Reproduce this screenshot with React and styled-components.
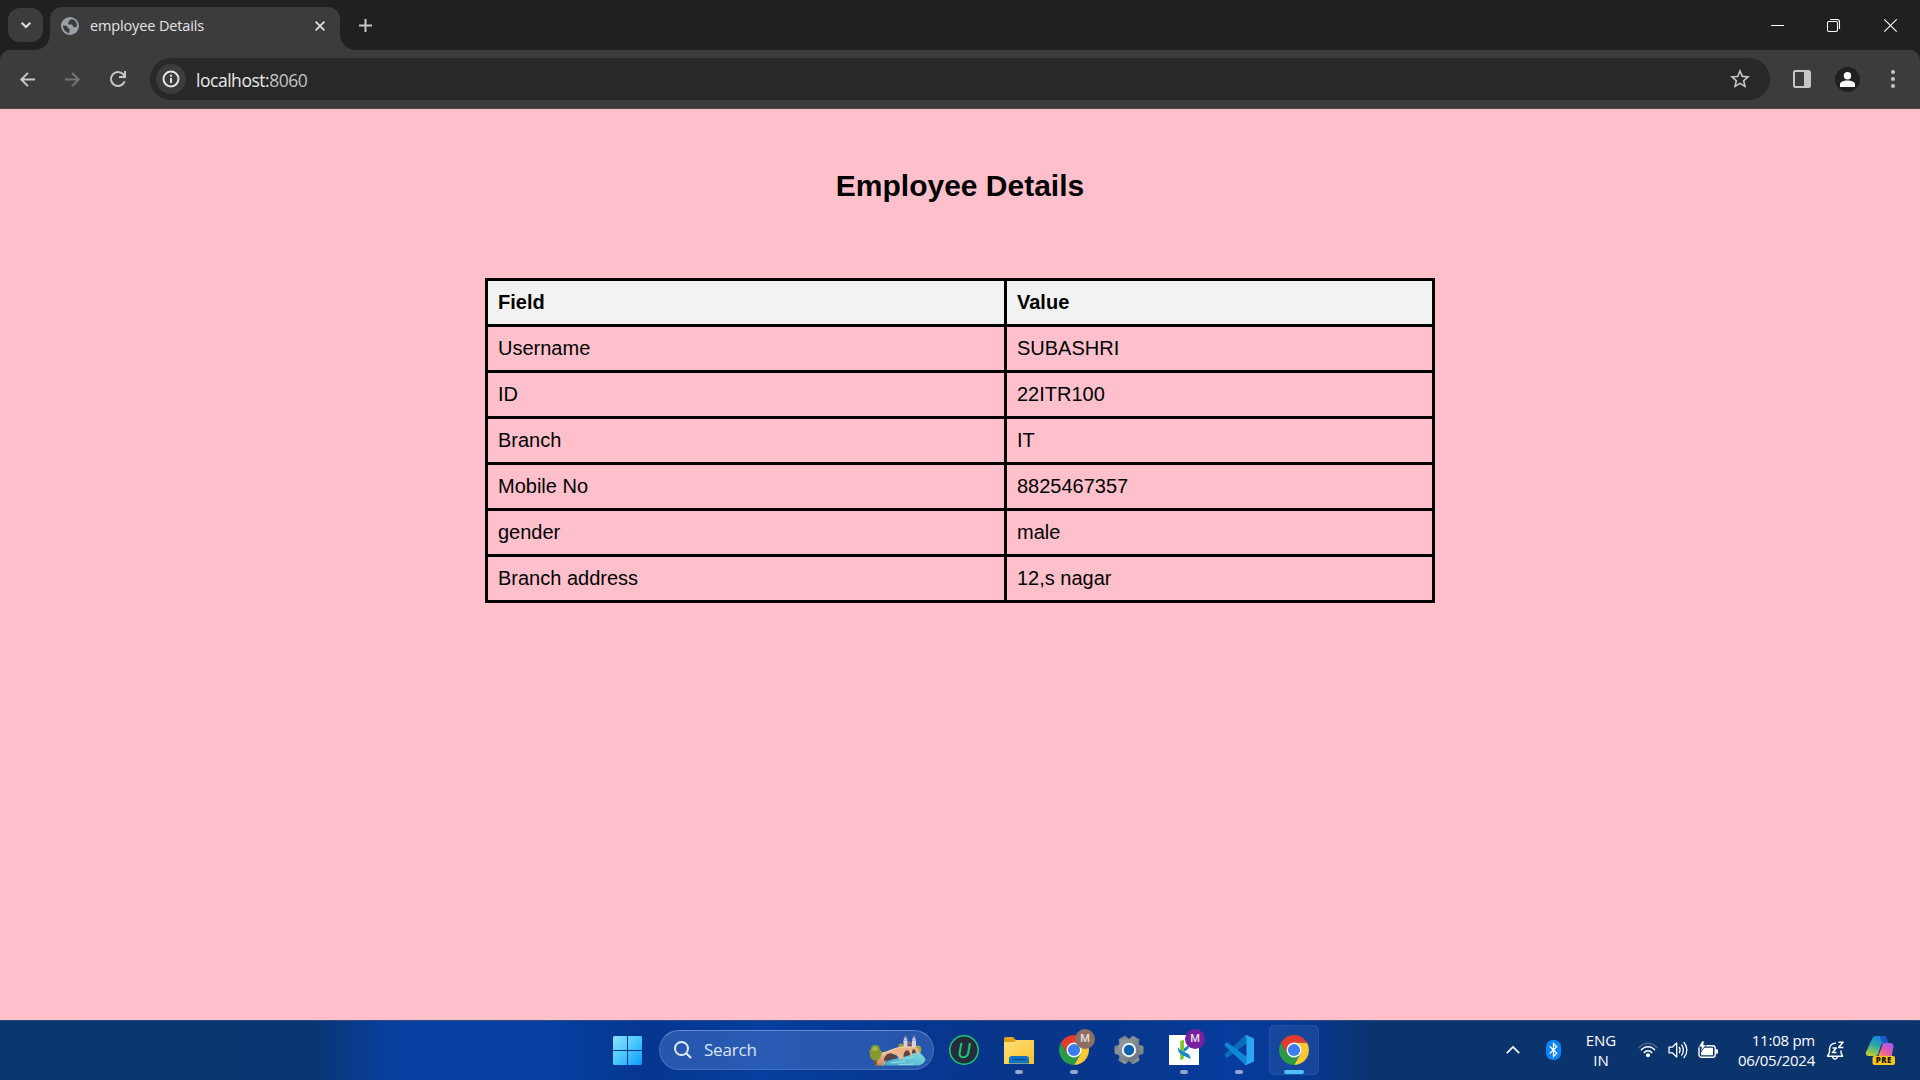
import React from 'react';
import styled, { createGlobalStyle } from 'styled-components';

const uiFont = '"Open Sans", "Noto Sans", sans-serif';

const GlobalStyle = createGlobalStyle`
  html, body { margin: 0; padding: 0; }
  body { overflow: hidden; }
  * { box-sizing: border-box; }
  svg { display: block; flex: none; overflow: visible; }
`;

const Screen = styled.div`
  display: flex;
  flex-direction: column;
  width: 1920px;
  height: 1080px;
  font-family: ${uiFont};
  overflow: hidden;
`;

/* ---------- browser frame ---------- */

const TabStrip = styled.header`
  display: flex;
  align-items: flex-end;
  height: 50px;
  padding-left: 8px;
  background: #1f2121;
`;

const TabSearch = styled.button`
  display: grid;
  place-items: center;
  width: 35px;
  height: 34px;
  margin: 0 7px 8px 0;
  padding: 0;
  border: 0;
  border-radius: 12px;
  background: #3c3c3c;
`;

const Tab = styled.div`
  position: relative;
  display: flex;
  align-items: center;
  width: 290px;
  height: 43px;
  padding: 0 15px 6px 11px;
  border-radius: 12px 12px 0 0;
  background: #3c3c3c;

  &::before,
  &::after {
    content: '';
    position: absolute;
    bottom: 0;
    width: 15px;
    height: 15px;
  }
  &::before {
    left: -15px;
    background: radial-gradient(circle at 0 0, transparent 14.5px, #3c3c3c 15px);
  }
  &::after {
    right: -15px;
    background: radial-gradient(circle at 100% 0, transparent 14.5px, #3c3c3c 15px);
  }
`;

const TabTitle = styled.span`
  flex: 1;
  margin-left: 11px;
  font-size: 14.5px;
  line-height: 20px;
  letter-spacing: -0.14px;
  color: #e3e3e3;
  white-space: nowrap;
`;

const NewTab = styled.div`
  display: grid;
  place-items: center;
  width: 34px;
  height: 34px;
  margin: 0 auto 8px 8px;
`;

const WindowButton = styled.div`
  display: grid;
  place-items: center;
  flex: none;
  width: ${(p) => p.$w}px;
  height: 50px;
`;

const ToolbarBack = styled.div`
  background: #1f2121;
`;

const Toolbar = styled.div`
  display: flex;
  align-items: center;
  height: 59px;
  border-radius: 10px 10px 0 0;
  border-bottom: 1px solid #4a4848;
  background: #3c3c3c;
`;

const NavGroup = styled.nav`
  display: flex;
  flex: none;
  width: 150px;
  padding-left: 5px;
`;

const ToolButton = styled.div`
  display: grid;
  place-items: center;
  flex: none;
  width: ${(p) => p.$w || 45}px;
  height: 40px;
  padding-left: ${(p) => p.$shift || 0}px;
`;

const AddressBar = styled.div`
  display: flex;
  align-items: center;
  flex: none;
  width: 1620px;
  height: 42px;
  padding: 0 20px 0 6px;
  border-radius: 21px;
  background: #282828;
`;

const SiteInfo = styled.div`
  display: grid;
  place-items: center;
  width: 30px;
  height: 30px;
  border-radius: 50%;
  background: #3c3c3c;
`;

const Address = styled.span`
  flex: 1;
  margin-left: 10px;
  padding-top: 1px;
  font-size: 17.5px;
  line-height: 24px;
  letter-spacing: -0.47px;
  color: #e8e8e8;
`;

const Port = styled.span`
  color: #c3c3c3;
`;

const Profile = styled.div`
  display: grid;
  place-items: center;
  width: 25px;
  height: 25px;
  border-radius: 50%;
  background: #1f2121;
`;

/* ---------- page ---------- */

const Page = styled.main`
  flex: 1;
  display: flex;
  flex-direction: column;
  align-items: center;
  background: #ffc0cb;
  color: #000;
  font-family: Arial, "Liberation Sans", sans-serif;
`;

const Heading = styled.h1`
  margin: 60px 0 75px;
  font-size: 30px;
  line-height: 34px;
  font-weight: 700;
`;

const Table = styled.table`
  width: 950px;
  table-layout: fixed;
  border-collapse: separate;
  border-spacing: 3px;
  background: #000;
  font-size: 20px;
  line-height: 23px;
`;

const HeadCell = styled.th`
  width: ${(p) => p.$w}px;
  padding: 10px;
  background: #f2f2f2;
  text-align: left;
`;

const Cell = styled.td`
  padding: 10px;
  background: #ffc0cb;
`;

/* ---------- taskbar ---------- */

const Taskbar = styled.footer`
  display: flex;
  align-items: center;
  height: 60px;
  box-shadow: inset 0 1px #2c4c7c;
  color: #fff;
  background: linear-gradient(
    90deg,
    #0b356e 0,
    #0b3572 310px,
    #07409f 390px,
    #0640a2 540px,
    #053690 650px,
    #063f9f 760px,
    #063792 900px,
    #073588 1030px,
    #07388f 1150px,
    #063c9d 1230px,
    #07388f 1310px,
    #0b346f 1370px,
    #0b336b 1920px
  );
`;

const StartButton = styled.div`
  flex: none;
  width: 29px;
  height: 29px;
  margin: 0 17px 0 613px;
`;

const SearchBox = styled.div`
  display: flex;
  align-items: center;
  flex: none;
  width: 275px;
  height: 40px;
  padding: 0 7px 0 14px;
  border: 1px solid rgba(150, 180, 235, 0.28);
  border-top-color: rgba(170, 195, 245, 0.45);
  border-radius: 20px;
  background: rgba(80, 125, 205, 0.46);
`;

const SearchLabel = styled.span`
  flex: 1;
  margin-left: 12px;
  font-size: 17px;
  line-height: 24px;
  letter-spacing: -0.2px;
  color: #dce5f5;
`;

const Apps = styled.div`
  display: flex;
  gap: 5px;
  margin-left: 5px;
`;

const AppButton = styled.div`
  position: relative;
  display: grid;
  place-items: center;
  width: 50px;
  height: 50px;
  border-radius: 5px;
  border: 1px solid ${(p) => (p.$active ? 'rgba(120,155,215,0.14)' : 'transparent')};
  background: ${(p) => (p.$active ? 'rgba(90,130,200,0.2)' : 'transparent')};
`;

const Indicator = styled.i`
  position: absolute;
  bottom: 0;
  left: 50%;
  width: ${(p) => (p.$active ? 20 : 8)}px;
  height: 4px;
  margin-left: ${(p) => (p.$active ? -10 : -4)}px;
  border-radius: 2px;
  background: ${(p) => (p.$active ? '#4cc2ff' : '#94a7cd')};
`;

const Badge = styled.span`
  position: absolute;
  top: 3px;
  right: 3px;
  display: grid;
  place-items: center;
  width: 20px;
  height: 20px;
  border-radius: 50%;
  background: ${(p) => p.$color};
  font: 500 11px/20px Roboto, sans-serif;
  color: #e9e0dd;
`;

const Tray = styled.div`
  display: flex;
  align-items: center;
  margin-left: 174px;
`;

const TraySlot = styled.div`
  display: grid;
  place-items: center;
  width: ${(p) => p.$w}px;
  height: 40px;
`;

const TrayText = styled.div`
  width: ${(p) => p.$w}px;
  padding-bottom: 1px;
  font-size: ${(p) => p.$size}px;
  line-height: 20px;
  letter-spacing: ${(p) => p.$track || 0}px;
  text-align: ${(p) => p.$align};
  white-space: nowrap;
`;

/* ---------- drawings ---------- */

const Line = ({ w, h, d, color = '#dedede', sw = 2, cap = 'butt', children }) => (
  <svg width={w} height={h} viewBox={`0 0 ${w} ${h}`} fill="none" stroke={color} strokeWidth={sw} strokeLinecap={cap}>
    {d && <path d={d} />}
    {children}
  </svg>
);

const Globe = () => (
  <svg width="18" height="18" viewBox="0 0 18 18">
    <circle cx="9" cy="9" r="9" fill="#9aa0a6" />
    <path
      d="M2 8.6c2 0 3.600 .2 4.300 1.100s.2 1.600 1.500 1.800c.8.1.8.9.700 1.500l-.3 3c-3.300-.3-6.400-3.400-6.200-7.400zM10.600 2c-.3 1.100-1.800 1.200-2.400 1.600s.2 1.600-.8 2.200c-.7.5-.5 1.600.6 1.700 1.200.1 2.700-.4 3.500.6.700.9.100 1.700 1.200 2 1.400.3 2.400-.1 3.200-.8.500-3.400-1.700-6.400-5.300-7.300z"
      fill="#3c3c3c"
    />
  </svg>
);

const Star = () => (
  <svg width="20" height="20" viewBox="2 2 20 20" fill="#c7c7c7">
    <path d="M22 9.240l-7.190-.620L12 2 9.190 8.630 2 9.240l5.460 4.730L5.820 21 12 17.270 18.180 21l-1.630-7.030L22 9.240zM12 15.400l-3.760 2.270 1-4.280-3.320-2.880 4.380-.380L12 6.100l1.710 4.040 4.380.380-3.320 2.880 1 4.280L12 15.400z" />
  </svg>
);

const Chrome = ({ size = 30 }) => (
  <svg width={size} height={size} viewBox="0 0 48 48">
    <path d="M24 12H44.780A24 24 0 0 1 24 48L34.390 30z" fill="#fcc934" />
    <path d="M13.610 30 3.220 12A24 24 0 0 0 24 48L34.390 30 24 24z" fill="#2a9a48" />
    <path d="M24 12H44.780A24 24 0 0 0 3.220 12L13.610 30z" fill="#e33b2e" />
    <circle cx="24" cy="24" r="12" fill="#fff" />
    <circle cx="24" cy="24" r="9.700" fill="#3a7df0" />
  </svg>
);

const WindowsLogo = () => (
  <svg width="29" height="29" viewBox="0 0 29 29">
    <defs>
      <linearGradient id="win" gradientUnits="userSpaceOnUse" x1="0" y1="0" x2="29" y2="29">
        <stop offset="0" stopColor="#8be3ff" />
        <stop offset=".5" stopColor="#4bc8fb" />
        <stop offset="1" stopColor="#0a9bf8" />
      </linearGradient>
    </defs>
    <path d="M1 0h13v14H0V1zM15 0h13l1 1v13H15zM0 15h14v14H1l-1-1zM15 15h14v13l-1 1H15z" fill="url(#win)" />
  </svg>
);

const Bridge = () => (
  <svg width="57" height="31" viewBox="0 0 57 31">
    <defs>
      <linearGradient id="water" x1="0" y1="1" x2="1" y2="0">
        <stop offset="0" stopColor="#3fa9c6" />
        <stop offset="1" stopColor="#86dfe2" />
      </linearGradient>
      <linearGradient id="stone" x1="1" y1="0" x2="0" y2="1">
        <stop offset="0" stopColor="#e6ad84" />
        <stop offset=".6" stopColor="#f0bb92" />
        <stop offset="1" stopColor="#b9805f" />
      </linearGradient>
    </defs>
    <circle cx="32" cy="11" r="2.600" fill="#97a03a" />
    <ellipse cx="49.300" cy="14.500" rx="3" ry="4" fill="#a3a83c" />
    <path d="M34.500 12V5.500h4V12zM43 12V5.500h4V12z" fill="#ddd2e2" />
    <path d="M34.300 5.500l2.200-5.500 2.200 5.500zM42.800 5.500L45 0l2.200 5.500z" fill="#c9bcd6" />
    <path d="M36 2.500l.5-2.500.5 2.500zM44.500 2.500L45 0l.5 2.500z" fill="#5d4f86" />
    <path d="M38.500 8l2.200-2 2.300 2v4.500h-4.500z" fill="#8c6c7d" />
    <path d="M39.800 9.500h2v3h-2z" fill="#4d3d55" />
    <path d="M13 30.500c1-3 6-5 13-6.500 8-1.500 13-3.500 16-5.500l8-2.500c1 3 6 5 6.500 9-1.500 3-4 5.500-8 5.500z" fill="url(#water)" />
    <path d="M6 30.500c-.5-6 1-11 7-12.500 7-1.500 13-5 19-6 6-.8 11-.5 16 1l1.500 1v4l-2.500 1c-.5-3-2.500-4-3.500-1v2l-3 .5c-.5-5-5-5-6-.5v3l-4.500 1.500c-1-6-8-7-11-1-2 2-3.500 4-4 7z" fill="url(#stone)" />
    <path d="M15 26c-.5-8 9.500-11.500 12.500-2.500C23 24 18.500 24.500 15 26zM35 21.500c-.5-7 5-9 6.500-1.500zM43 18.500c-.2-5 3-6 4-.5z" fill="#5d4340" />
    <path d="M11 18.500c8-1 14-6 23-6.500h14" fill="none" stroke="#f8d3b0" strokeWidth="1" />
    <path d="M22 28l14-1.500M34 24l11-2M30 29.500l15-.5" stroke="#b0e8ec" strokeWidth=".8" />
    <path d="M5 23h2.800v7H5z" fill="#725529" />
    <path d="M.8 19c-1-2.500 0-4.500 1.200-5 0-3 2.500-4.500 4.700-4 2.800 0 4 2 4 4.500 2.600 1.500 2.600 4.500 1.300 6-.5 3-3 5-5.800 5-3.200 0-5.400-3-5.400-6.500z" fill="#869a30" />
    <path d="M3 14.500c1-3 4-3.500 5.500-1.500 1 3-3 4-5.500 1.500z" fill="#a9b947" />
  </svg>
);

const UninstallerIcon = () => (
  <svg width="30" height="30" viewBox="0 0 30 30">
    <circle cx="15" cy="15" r="14.200" fill="#252d3c" stroke="#20c874" strokeWidth="1.500" />
    <text x="15" y="22.500" textAnchor="middle" fontFamily="Roboto, sans-serif" fontStyle="italic" fontSize="21" fill="#20c874">U</text>
  </svg>
);

const FolderIcon = () => (
  <svg width="30" height="27" viewBox="0 0 30 27">
    <defs>
      <linearGradient id="folder" x1="0" y1="0" x2="1" y2="1">
        <stop offset="0" stopColor="#ffe07a" />
        <stop offset="1" stopColor="#fbc22d" />
      </linearGradient>
    </defs>
    <path d="M0 1.500Q0 0 1.500 0H9l3 3h3v4H0z" fill="#dea117" />
    <path d="M0 5h10l2.500-2H30v24H0z" fill="url(#folder)" />
    <path d="M5 26.500V22q0-3 3-3h14q3 0 3 3v4.500z" fill="#0f74c9" />
    <path d="M8 22.500h14" stroke="#0a4f8f" strokeWidth="1.300" />
  </svg>
);

const teeth = [0, 60, 120, 180, 240, 300];

const GearIcon = () => (
  <svg width="30" height="30" viewBox="0 0 30 30">
    <defs>
      <linearGradient id="gear" x1="0" y1="0" x2="1" y2="1">
        <stop offset="0" stopColor="#9ba2a8" />
        <stop offset="1" stopColor="#666e76" />
      </linearGradient>
    </defs>
    <g fill="url(#gear)" stroke="#7f878e" strokeWidth="1" strokeLinejoin="round">
      {teeth.map((a) => (
        <path key={a} d="M10 6l1.500-5h7L20 6z" transform={`rotate(${a + 30} 15 15)`} />
      ))}
    </g>
    <circle cx="15" cy="15" r="11.300" fill="url(#gear)" />
    <circle cx="15" cy="15" r="7.200" fill="#f2f5f8" />
    <circle cx="15" cy="15" r="5.200" fill="#0b63b0" />
  </svg>
);

const SproutIcon = () => (
  <svg width="30" height="30" viewBox="0 0 30 30">
    <path d="M0 0h30v30H0z" fill="#fff" />
    <path d="M11.300 6l3.600-1.200V22q0 2.500-3.600 3z" fill="#7ac51c" />
    <path d="M14.900 13.500L20 9.800q.5 3.200-1.500 4.700l-3.600 2.500z" fill="#1487d4" />
    <path d="M9 12q.8 2.500 4 4l5.500 2.600q3 1.600 3 5.400l-8.700-4.200Q8.500 17.500 9 12z" fill="#1487d4" />
  </svg>
);

const CodeIcon = () => (
  <svg width="30" height="30" viewBox="0 0 30 30">
    <path d="M1 19L20.500.8Q21.500 0 22.500 0L27 5 4 22.300q-1 .7-1.800 0L.9 21q-.8-1 .1-2z" fill="#0a6db9" />
    <path d="M1 11l19.500 18.200q1 .8 2 .8L27 25 4 7.700q-1-.7-1.800 0L.9 9q-.8 1 .1 2z" fill="#0f87d2" />
    <path d="M22 0l7 3q1 .5 1 1.600v20.800q0 1.100-1 1.600l-7 3q-1 .1-1.700-.6 2.200.8 2.200-1.400V2q0-2.200-2.200-1.400Q21 0 22 0z" fill="#2ba7f2" />
  </svg>
);

const Wifi = () => (
  <svg width="20" height="16" viewBox="0 0 20 16" fill="none" stroke="#fff" strokeWidth="1.600">
    <path d="M.6 6.200C5.500-.2 14.500-.2 19.400 6.200" stroke="#456490" />
    <path d="M3 8.300c3.700-4.700 10.300-4.700 14 0M5.900 10.900c2.200-2.800 6-2.800 8.200 0" />
    <circle cx="10" cy="13.300" r="2" fill="#fff" stroke="none" />
  </svg>
);

const Speaker = () => (
  <svg width="20" height="18" viewBox="0 0 20 18" fill="none" stroke="#fff" strokeWidth="1.300" strokeLinejoin="round" strokeLinecap="round">
    <path d="M1 6.200h3.200L8.700 2v14l-4.500-4.200H1z" />
    <path d="M11.300 6.300c1 1.600 1 3.800 0 5.400M13.700 3.900c2.200 2.900 2.200 7.300 0 10.200M16 1.500c3.800 4.300 3.800 10.700 0 15" />
  </svg>
);

const Battery = () => (
  <svg width="20" height="18" viewBox="0 0 20 18">
    <rect x="1" y="4.700" width="16.200" height="11.600" rx="2.600" fill="none" stroke="#fff" strokeWidth="1.400" />
    <path d="M18 8.300h1q1 0 1 1v2.400q0 1-1 1h-1z" fill="#fff" />
    <path d="M5 6.700h10v7.600H3V11z" fill="#fff" />
    <path d="M3.800 0h3L5.600 3.400h3L2.600 11l.8-5H.5z" fill="#fff" stroke="#0b346c" strokeWidth=".9" />
  </svg>
);

const Bell = () => (
  <svg width="17" height="19" viewBox="0.500 0 17 19" fill="none" stroke="#fff" strokeWidth="1.500" strokeLinejoin="round">
    <path d="M9.500 2.300C5.500 2.100 3 4.500 3 8v3.500L1 15.200h15l-1.500-3.700V9.500" />
    <path d="M6 15.500c.5 3.300 4.500 3.300 5 0" />
    <path d="M6 7h3.800L6 11.600h4" />
    <path d="M12 1.200h4.600L12 6.600h4.800" />
  </svg>
);

const Copilot = () => (
  <svg width="30" height="29" viewBox="0 0 30 29">
    <defs>
      <linearGradient id="cpA" x1="0.600" y1="0" x2="0.200" y2="1">
        <stop offset="0" stopColor="#167fe0" />
        <stop offset=".45" stopColor="#28a9a8" />
        <stop offset="1" stopColor="#c3cf2c" />
      </linearGradient>
      <linearGradient id="cpB" x1="0.800" y1="0" x2="0.200" y2="1">
        <stop offset="0" stopColor="#a45af0" />
        <stop offset=".6" stopColor="#e957a0" />
        <stop offset="1" stopColor="#fb9352" />
      </linearGradient>
    </defs>
    <path d="M7 3Q8 0 11 0h8q2 0 2.700 2L23 7h-4q-2.500 0-3.300 3l-2.500 8q-.7 2-3 2H4q-4 0-3-4z" fill="url(#cpA)" />
    <path d="M15 0h4q2 0 2.700 2L23 7h-4q-2 0-3-2.500z" fill="#1b55c8" />
    <path d="M19 7h6q4 0 3.500 4l-2 10H13l4-11q.5-3 2-3z" fill="url(#cpB)" />
    <rect x="7.500" y="20" width="22.500" height="9" rx="2" fill="#fcc419" />
    <text x="18.800" y="27.300" textAnchor="middle" fontFamily="Open Sans, sans-serif" fontWeight="800" fontSize="7.800" letterSpacing=".5" fill="#141414">PRE</text>
  </svg>
);

/* ---------- data ---------- */

const rows = [
  ['Username', 'SUBASHRI'],
  ['ID', '22ITR100'],
  ['Branch', 'IT'],
  ['Mobile No', '8825467357'],
  ['gender', 'male'],
  ['Branch address', '12,s nagar'],
];

const apps = [
  { id: 'uninstaller', icon: <UninstallerIcon /> },
  { id: 'files', icon: <FolderIcon />, open: true },
  { id: 'chrome-m', icon: <Chrome />, open: true, badge: '#8d6e63' },
  { id: 'settings', icon: <GearIcon /> },
  { id: 'sprout', icon: <SproutIcon />, open: true, badge: '#7b1fa2' },
  { id: 'code', icon: <CodeIcon />, open: true },
  { id: 'chrome', icon: <Chrome />, open: true, active: true },
];

const BrowserFrame = () => (
  <>
    <TabStrip>
      <TabSearch>
        <Line w={10} h={6} d="M.7.7 5 5 9.300.7" />
      </TabSearch>
      <Tab>
        <Globe />
        <TabTitle>employee Details</TabTitle>
        <Line w={10} h={10} d="M.6.6l8.800 8.800M9.400.6.6 9.400" sw={1.8} />
      </Tab>
      <NewTab>
        <Line w={13} h={13} d="M6.500 0v13M0 6.500h13" color="#c7c7c7" />
      </NewTab>
      <WindowButton $w={57}>
        <Line w={13} h={1} d="M0 .5h13" color="#fff" sw={1} />
      </WindowButton>
      <WindowButton $w={55}>
        <Line w={13} h={13} color="#fff" sw={1.1}>
          <rect x=".5" y="2.500" width="10" height="10" rx="1.500" />
          <path d="M3 .5h7q2.500 0 2.500 2.500v7" />
        </Line>
      </WindowButton>
      <WindowButton $w={59}>
        <Line w={13} h={13} d="M.3.3l12.400 12.400M12.700.3.3 12.700" color="#fff" sw={1.1} />
      </WindowButton>
    </TabStrip>
    <ToolbarBack>
      <Toolbar>
        <NavGroup>
          <ToolButton>
            <Line w={15} h={15} d="M15 7.500H1.500M7.900.9 1.300 7.500l6.600 6.600" color="#c7c7c7" />
          </ToolButton>
          <ToolButton>
            <Line w={15} h={15} d="M0 7.500h13.500M7.100.9l6.600 6.600-6.600 6.600" color="#757575" />
          </ToolButton>
          <ToolButton>
            <Line w={16} h={16} color="#c7c7c7">
              <path d="M14.600 10.300A7 7 0 1 1 13.300 3.400L15 5.500" />
              <path d="M15 0v6H9" />
            </Line>
          </ToolButton>
        </NavGroup>
        <AddressBar>
          <SiteInfo>
            <Line w={18} h={18} color="#e3e3e3">
              <circle cx="9" cy="9" r="7.500" />
              <path d="M9 8v5M9 4.800v2" />
            </Line>
          </SiteInfo>
          <Address>
            localhost:<Port>8060</Port>
          </Address>
          <Star />
        </AddressBar>
        <ToolButton $w={64}>
          <svg width="18" height="18" viewBox="0 0 18 18">
            <rect x="1" y="1" width="16" height="16" rx="1.500" fill="none" stroke="#c7c7c7" strokeWidth="2" />
            <path d="M11 1h6v16h-6z" fill="#c7c7c7" />
          </svg>
        </ToolButton>
        <ToolButton $w={27}>
          <Profile>
            <svg width="15" height="15" viewBox="0 0 15 15" fill="#fff">
              <circle cx="7.500" cy="3.700" r="3.700" />
              <path d="M0 15v-2.500C0 9.500 4 8.500 7.500 8.500s7.500 1 7.500 4V15z" />
            </svg>
          </Profile>
        </ToolButton>
        <ToolButton $w={59} $shift={4}>
          <svg width="4" height="18" viewBox="0 0 4 18" fill="#c7c7c7">
            <circle cx="2" cy="2" r="2" />
            <circle cx="2" cy="9" r="2" />
            <circle cx="2" cy="16" r="2" />
          </svg>
        </ToolButton>
      </Toolbar>
    </ToolbarBack>
  </>
);

const EmployeePage = () => (
  <Page>
    <Heading>Employee Details</Heading>
    <Table>
      <thead>
        <tr>
          <HeadCell $w={516}>Field</HeadCell>
          <HeadCell $w={425}>Value</HeadCell>
        </tr>
      </thead>
      <tbody>
        {rows.map(([field, value]) => (
          <tr key={field}>
            <Cell>{field}</Cell>
            <Cell>{value}</Cell>
          </tr>
        ))}
      </tbody>
    </Table>
  </Page>
);

const DesktopTaskbar = () => (
  <Taskbar>
    <StartButton>
      <WindowsLogo />
    </StartButton>
    <SearchBox>
      <Line w={18} h={18} color="#e2eaf8">
        <circle cx="7.500" cy="7.500" r="6.500" />
        <path d="M12.500 12.500 17 17" strokeWidth="2.200" />
      </Line>
      <SearchLabel>Search</SearchLabel>
      <Bridge />
    </SearchBox>
    <Apps>
      {apps.map((a) => (
        <AppButton key={a.id} $active={a.active}>
          {a.icon}
          {a.badge && <Badge $color={a.badge}>M</Badge>}
          {a.open && <Indicator $active={a.active} />}
        </AppButton>
      ))}
    </Apps>
    <Tray>
      <TraySlot $w={40}>
        <Line w={14} h={8} d="M.8 7.200 7 1l6.200 6.200" color="#fff" sw={1.7} />
      </TraySlot>
      <TraySlot $w={40}>
        <svg width="15" height="20" viewBox="0 0 15 20">
          <rect width="15" height="20" rx="6.500" fill="#0a84f8" />
          <path d="M3.800 6.500l7 6.700-3.300 3.300v-13l3.300 3.200-7 6.800" fill="none" stroke="#fff" strokeWidth="1.300" />
        </svg>
      </TraySlot>
      <TrayText $w={56} $size={15} $align="center">
        ENG
        <br />
        IN
      </TrayText>
      <TraySlot $w={38}>
        <Wifi />
      </TraySlot>
      <TraySlot $w={22}>
        <Speaker />
      </TraySlot>
      <TraySlot $w={38}>
        <Battery />
      </TraySlot>
      <TrayText $w={88} $size={15} $align="right" $track={-0.25}>
        11:08 pm
        <br />
        06/05/2024
      </TrayText>
      <TraySlot $w={40}>
        <Bell />
      </TraySlot>
      <TraySlot $w={50}>
        <Copilot />
      </TraySlot>
    </Tray>
  </Taskbar>
);

export default function App() {
  return (
    <Screen>
      <GlobalStyle />
      <BrowserFrame />
      <EmployeePage />
      <DesktopTaskbar />
    </Screen>
  );
}
